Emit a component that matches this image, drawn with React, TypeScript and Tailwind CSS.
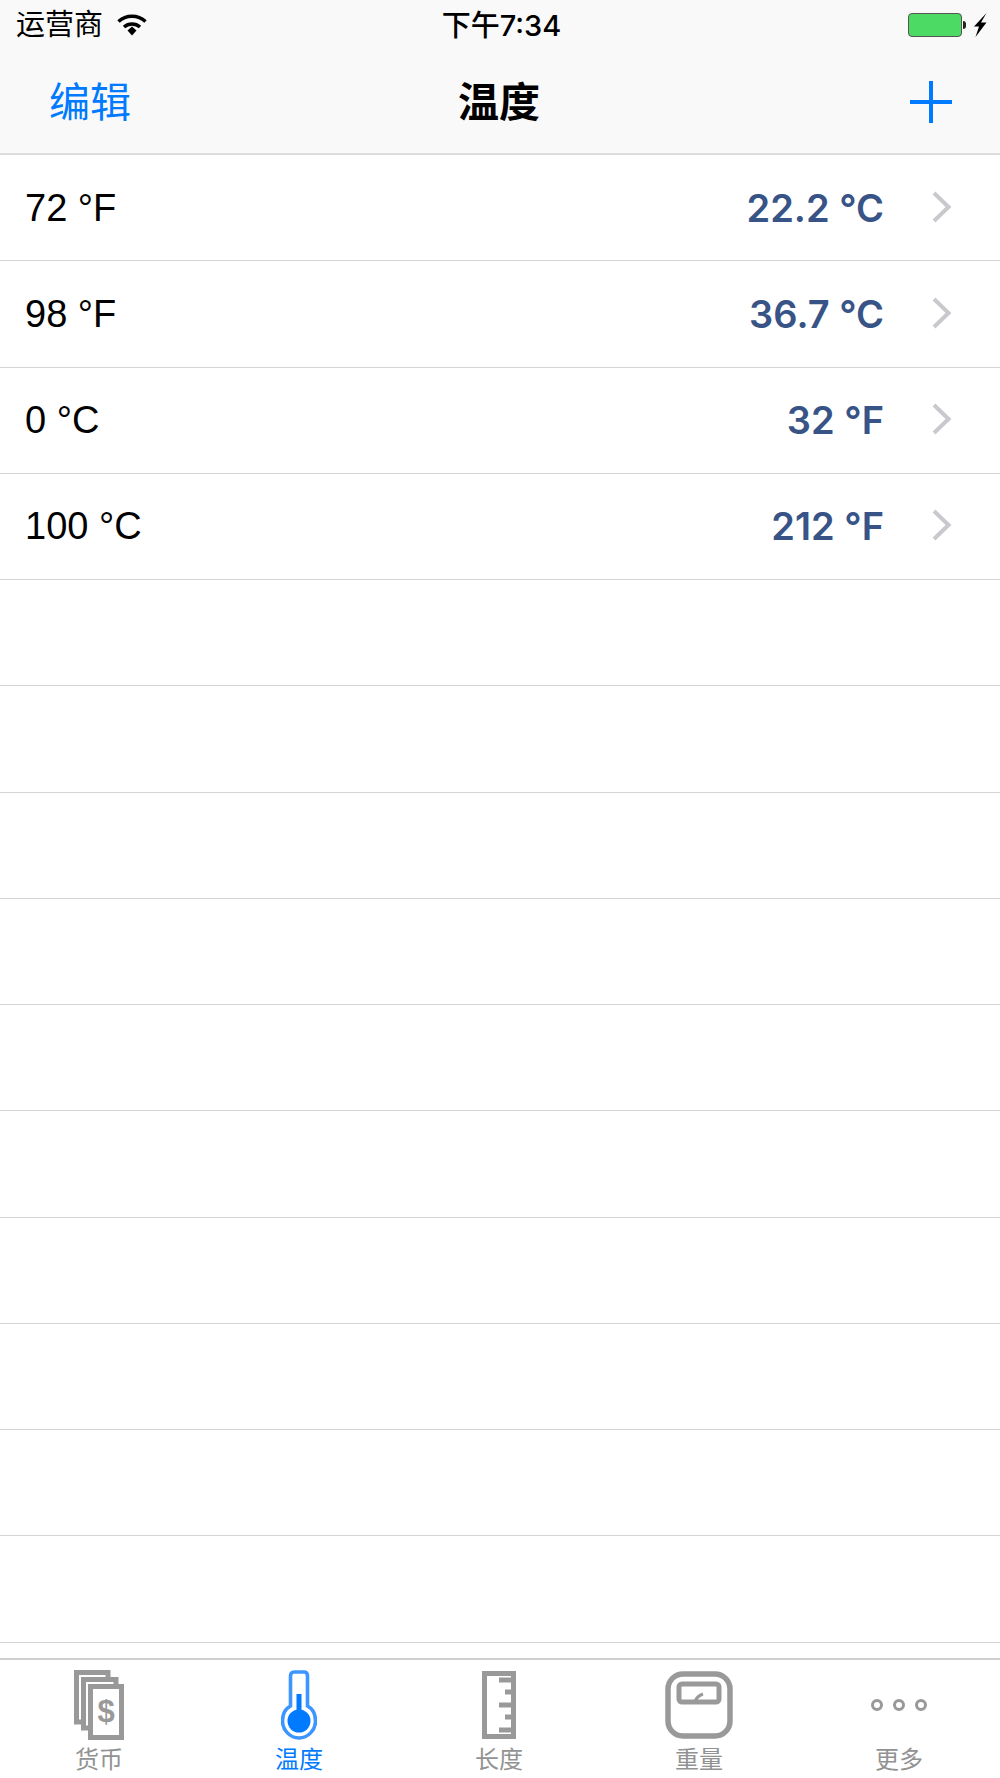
import React from 'react';

const cjk = "font-['Liberation_Sans','Noto_Sans_CJK_SC',sans-serif]";

const rows = [
  { from: '72 °F', to: '22.2 °C' },
  { from: '98 °F', to: '36.7 °C' },
  { from: '0 °C', to: '32 °F' },
  { from: '100 °C', to: '212 °F' },
];

function Wifi() {
  return (
    <svg width="32" height="24" viewBox="0 0 32 24" fill="none">
      <path d="M2.5 8.5C10 1.5 22 1.5 29.5 8.5" stroke="#000" strokeWidth="3.4" />
      <path d="M8 14C12.500 10 19.500 10 24 14" stroke="#000" strokeWidth="3.4" />
      <path d="M11.500 17.500L16 13.500L20.500 17.500L16 22.500Z" fill="#000" />
    </svg>
  );
}

function Battery() {
  return (
    <div className="flex items-center">
      <div className="w-[54px] h-[24px] rounded-[4px] border border-[#555] bg-[#4cd964]" />
      <div className="w-[3px] h-[8px] rounded-r-full bg-[#222] ml-[1px]" />
    </div>
  );
}

function Bolt() {
  return (
    <svg width="14" height="24" viewBox="0 0 14 24" className="ml-[7px]">
      <path d="M13.500 0L1 13.500H6L2.500 24L13.500 9.500H8Z" fill="#000" />
    </svg>
  );
}

function MoneyIcon() {
  return (
    <svg width="50" height="70" viewBox="0 0 50 70" fill="none" stroke="#999999" strokeWidth="5">
      <path d="M20 2.500H2.500V52H9M34 9V2.500H18" />
      <path d="M36 9.500H9.500V58H16M42 16V9.500H30" />
      <rect x="16.500" y="16.500" width="31" height="51" fill="#fff" />
      <text
        x="32"
        y="52"
        textAnchor="middle"
        fontSize="31"
        fontWeight="700"
        fill="#999999"
        stroke="none"
        fontFamily="Liberation Sans, sans-serif"
      >
        $
      </text>
    </svg>
  );
}

function ThermometerIcon() {
  return (
    <svg width="36" height="72" viewBox="0 0 36 72" fill="none">
      <path
        d="M9.500 37V7C9.500 4.500 11 3 13 3H23C25 3 26.500 4.500 26.500 7V37C32 40 34.500 45 34.500 52C34.500 61 27 69 18 69C9 69 1.500 61 1.500 52C1.500 45 4 40 9.500 37Z"
        stroke="#3d96ff"
        strokeWidth="3.600"
      />
      <rect x="15.500" y="25" width="5" height="22" fill="#007aff" />
      <circle cx="18" cy="52" r="11.500" fill="#007aff" />
    </svg>
  );
}

function RulerIcon() {
  return (
    <svg width="34" height="68" viewBox="0 0 34 68" fill="none" stroke="#999999" strokeWidth="5">
      <rect x="2.500" y="2.500" width="29" height="63" />
      <path d="M17 9H32M23 21H32M17 34H32M23 46H32M17 59H32" />
    </svg>
  );
}

function ScaleIcon() {
  return (
    <svg width="68" height="68" viewBox="0 0 68 68" fill="none" stroke="#999999">
      <rect x="3" y="3" width="62" height="62" rx="15" strokeWidth="5.500" />
      <rect x="14" y="13" width="40" height="18" rx="3" strokeWidth="5" />
      <path d="M30 31C31 27 35 24 38 23" strokeWidth="3" />
    </svg>
  );
}

function MoreIcon() {
  return (
    <svg width="58" height="14" viewBox="0 0 58 14" fill="none" stroke="#999999" strokeWidth="3">
      <circle cx="7" cy="7" r="4.500" />
      <circle cx="29" cy="7" r="4.500" />
      <circle cx="51" cy="7" r="4.500" />
    </svg>
  );
}

const tabs = [
  { label: '货币', icon: <MoneyIcon />, active: false },
  { label: '温度', icon: <ThermometerIcon />, active: true },
  { label: '长度', icon: <RulerIcon />, active: false },
  { label: '重量', icon: <ScaleIcon />, active: false },
  { label: '更多', icon: <MoreIcon />, active: false },
];

export default function App() {
  return (
    <div className={`w-[1000px] h-[1778px] bg-white flex flex-col overflow-hidden ${cjk}`}>
      <header className="h-[155px] shrink-0 bg-[#f9f9f9] border-b-2 border-[#dcdcdc] flex flex-col">
        <div className="h-[50px] flex items-center justify-between pl-[16px] pr-[13px]">
          <div className="flex-1 flex items-center gap-[13px]">
            <span className="text-[29px] leading-none text-black">运营商</span>
            <Wifi />
          </div>
          <span className="text-[29px] leading-none font-medium font-['Inter','Noto_Sans_CJK_SC',sans-serif] text-black">
            下午7:34
          </span>
          <div className="flex-1 flex items-center justify-end">
            <Battery />
            <Bolt />
          </div>
        </div>
        <div className="flex-1 flex items-center justify-between pl-[49px] pr-[48px]">
          <div className="flex-1 text-[41px] leading-none text-[#007aff] pt-[3px]">编辑</div>
          <div className="text-[41px] leading-none font-bold text-black mr-[3px] pt-[3px]">温度</div>
          <div className="flex-1 flex justify-end">
            <svg width="42" height="42" viewBox="0 0 42 42">
              <path d="M0 21H42M21 0V42" stroke="#007aff" strokeWidth="4" />
            </svg>
          </div>
        </div>
      </header>

      <main className="flex-1 flex flex-col overflow-hidden">
        {rows.map((row) => (
          <div
            key={row.from}
            className="h-[106.28px] shrink-0 border-b border-[#d4d4d4] flex items-center pl-[25px] pr-[48px]"
          >
            <span className="flex-1 text-[38px] leading-none text-black">{row.from}</span>
            <span className="text-[38px] leading-none font-semibold font-['Inter',sans-serif] text-[#385487] mr-[48px]">
              {row.to}
            </span>
            <svg width="20" height="32" viewBox="0 0 20 32" fill="none" className="-mt-[2px]">
              <path d="M2 2L16.500 16L2 30" stroke="#c8c8cd" strokeWidth="4" />
            </svg>
          </div>
        ))}
        {Array.from({ length: 10 }).map((_, i) => (
          <div key={i} className="h-[106.28px] shrink-0 border-b border-[#d4d4d4]" />
        ))}
      </main>

      <nav className="h-[120px] shrink-0 border-t-2 border-[#cfcfcf] bg-white grid grid-cols-5">
        {tabs.map((tab) => (
          <div key={tab.label} className="flex flex-col items-center -translate-x-[1px]">
            <div className="h-[76px] pt-[13px] flex items-center justify-center">{tab.icon}</div>
            <span
              className={`mt-[12px] text-[24px] leading-none ${tab.active ? 'text-[#007aff]' : 'text-[#929292]'}`}
            >
              {tab.label}
            </span>
          </div>
        ))}
      </nav>
    </div>
  );
}
